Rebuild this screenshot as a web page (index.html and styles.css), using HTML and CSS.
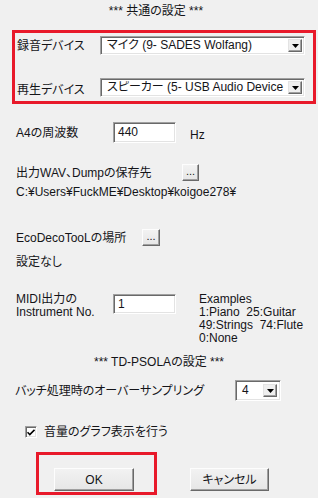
FILE: index.html
```html
<!DOCTYPE html>
<html lang="ja">
<head>
<meta charset="utf-8">
<title>設定</title>
<link rel="stylesheet" href="styles.css">
</head>
<body>
<div class="dialog">
  <div class="title title-common">*** 共通の設定 ***</div>

  <div class="redbox devices">
    <div class="dev-row">
      <span class="dev-label">録音デバイス</span>
      <div class="combo combo-dev">
        <span class="combo-val">マイク (9- SADES Wolfang)</span>
        <span class="dd"><svg width="7" height="4" viewBox="0 0 7 4"><path d="M0 0h7L3.5 4z" fill="#000"/></svg></span>
      </div>
    </div>
    <div class="dev-row dev-row-2">
      <span class="dev-label">再生デバイス</span>
      <div class="combo combo-dev">
        <span class="combo-val">スピーカー (5- USB Audio Device</span>
        <span class="dd"><svg width="7" height="4" viewBox="0 0 7 4"><path d="M0 0h7L3.5 4z" fill="#000"/></svg></span>
      </div>
    </div>
  </div>

  <div class="row a4">
    <span class="lbl lbl-97">A4の周波数</span>
    <div class="edit edit-a4">440</div>
    <span class="unit">Hz</span>
  </div>

  <div class="row out">
    <span class="lbl lbl-out">出力WAV、Dumpの保存先</span>
    <button class="btn dots">...</button>
  </div>
  <div class="textline path">C:¥Users¥FuckME¥Desktop¥koigoe278¥</div>

  <div class="row eco">
    <span class="lbl lbl-eco">EcoDecoTooLの場所</span>
    <button class="btn dots dots-eco">...</button>
  </div>
  <div class="textline note">設定なし</div>

  <div class="row midi">
    <div class="lbl-97 midi-label"><div class="ml-line">MIDI出力の</div><div class="ml-line">Instrument No.</div></div>
    <div class="edit edit-midi">1</div>
    <div class="examples">Examples<br>1:Piano&nbsp;&nbsp;25:Guitar<br>49:Strings&nbsp;&nbsp;74:Flute<br>0:None</div>
  </div>

  <div class="title title-psola">*** TD-PSOLAの設定 ***</div>

  <div class="row batch">
    <span class="lbl lbl-batch">バッチ処理時のオーバーサンプリング</span>
    <div class="combo combo-batch">
      <span class="combo-val">4</span>
      <span class="dd"><svg width="7" height="4" viewBox="0 0 7 4"><path d="M0 0h7L3.5 4z" fill="#000"/></svg></span>
    </div>
  </div>

  <div class="row check">
    <span class="cb"><svg width="8" height="7" viewBox="0 0 8 7"><path d="M0.5 3.2l2.3 2.3L7.5 0.8" fill="none" stroke="#000" stroke-width="1.6"/></svg></span>
    <span class="cb-label">音量のグラフ表示を行う</span>
  </div>

  <div class="buttons">
    <div class="redbox okwrap"><button class="btn push">OK</button></div>
    <button class="btn push cancel">キャンセル</button>
  </div>
</div>
</body>
</html>
```

FILE: styles.css
```css
html, body {
  margin: 0;
  padding: 0;
  background: #f0f0f0;
}

body {
  width: 318px;
  height: 498px;
  overflow: hidden;
  font-family: "Liberation Sans", "Noto Sans CJK JP", sans-serif;
  font-size: 12px;
  font-feature-settings: "palt";
  color: #141418;
}

.dialog {
  display: flex;
  flex-direction: column;
  align-items: flex-start;
}

.title {
  align-self: stretch;
  text-align: center;
  line-height: 14px;
  height: 14px;
}

.title-common {
  margin-top: 4px;
  padding-right: 6px;
}

.title-psola {
  margin-top: 10px;
}

.redbox {
  box-sizing: border-box;
  border: 3px solid #e8192a;
}

.devices {
  margin: 12px 0 0 12px;
  width: 304px;
  padding: 3px 0 4px 2px;
}

.dev-row {
  display: flex;
  align-items: center;
  height: 19px;
}

.dev-row-2 {
  margin-top: 23px;
}

.dev-label {
  width: 83px;
  line-height: 14px;
}

.dev-row-2 .dev-label {
  padding-top: 4px;
}

.combo {
  box-sizing: border-box;
  display: flex;
  align-items: stretch;
  background: #fff;
  border: 1px solid;
  border-color: #a0a0a0 #fff #fff #a0a0a0;
  box-shadow: inset 1px 1px #696969, inset -1px -1px #e3e3e3;
  padding: 2px 2px 2px 2px;
}

.combo-dev {
  width: 205px;
  height: 19px;
}

.combo-val {
  flex: 1;
  overflow: hidden;
  white-space: nowrap;
  line-height: 13px;
  padding-left: 4px;
  min-width: 0;
}

.dd {
  box-sizing: border-box;
  width: 14px;
  flex: none;
  display: flex;
  align-items: center;
  justify-content: center;
  background: #efefef;
  border: 1px solid;
  border-color: #e3e3e3 #696969 #696969 #e3e3e3;
  box-shadow: inset -1px -1px #a0a0a0;
}

.row {
  display: flex;
  align-items: center;
  margin-left: 16px;
}

.lbl {
  line-height: 14px;
  white-space: nowrap;
}

.lbl-97 {
  width: 97px;
}

.edit {
  box-sizing: border-box;
  background: #fff;
  border: 1px solid;
  border-color: #a0a0a0 #fff #fff #a0a0a0;
  box-shadow: inset 1px 1px #696969, inset -1px -1px #e3e3e3;
  width: 63px;
  padding-left: 4px;
  line-height: 14px;
}

.a4 {
  margin-top: 18px;
  height: 21px;
}

.edit-a4 {
  height: 21px;
  padding-top: 2px;
}

.unit {
  margin-left: 14px;
  padding-top: 4px;
  line-height: 14px;
}

.out {
  margin-top: 21px;
  height: 17px;
}

.lbl-out {
  width: 166px;
}

.btn {
  box-sizing: border-box;
  font: inherit;
  color: #141418;
  background: linear-gradient(#f2f2f2, #e6e6e6);
  border: 1px solid;
  border-color: #fdfdfd #696969 #696969 #fdfdfd;
  box-shadow: inset -1px -1px #a0a0a0;
  padding: 0;
  margin: 0;
}

.dots {
  width: 17px;
  height: 17px;
  line-height: 12px;
  font-size: 11px;
  display: flex;
  align-items: flex-end;
  justify-content: center;
  padding-bottom: 3px;
}

.dots-eco {
  width: 18px;
}

.textline {
  margin-left: 16px;
  line-height: 14px;
  height: 14px;
  white-space: nowrap;
}

.path {
  margin-top: 4px;
}

.eco {
  margin-top: 30px;
  height: 17px;
}

.lbl-eco {
  width: 126px;
}

.note {
  margin-top: 9px;
}

.midi {
  margin-top: 24px;
  align-items: flex-start;
}

.midi-label {
  display: flex;
  flex-direction: column;
  gap: 1px;
  padding-top: 0;
}

.ml-line {
  height: 12px;
  line-height: 12px;
  white-space: nowrap;
}

.edit-midi {
  height: 20px;
  margin-top: 1px;
  padding-top: 2px;
}

.examples {
  margin-left: 23px;
  line-height: 13px;
  white-space: nowrap;
}

.batch {
  margin-top: 11px;
  margin-left: 15px;
  height: 21px;
}

.lbl-batch {
  width: 220px;
}

.combo-batch {
  width: 46px;
  height: 21px;
  padding: 3px 3px 3px 2px;
}

.combo-batch .combo-val {
  padding-left: 4px;
}

.check {
  margin-top: 24px;
  margin-left: 25px;
  height: 14px;
}

.cb {
  box-sizing: border-box;
  width: 12px;
  height: 12px;
  display: flex;
  align-items: center;
  justify-content: center;
  background: #fff;
  border: 1px solid;
  border-color: #a0a0a0 #fff #fff #a0a0a0;
  box-shadow: inset 1px 1px #696969, inset -1px -1px #e3e3e3;
}

.cb-label {
  margin-left: 7px;
  line-height: 14px;
}

.buttons {
  display: flex;
  align-items: flex-end;
  margin-top: 13px;
}

.okwrap {
  margin-left: 36px;
  width: 121px;
  padding: 13px 0 1px 15px;
}

.push {
  width: 80px;
  height: 23px;
  line-height: 20px;
  text-align: center;
}

.cancel {
  width: 79px;
  margin-left: 33px;
  margin-bottom: 4px;
}
```
